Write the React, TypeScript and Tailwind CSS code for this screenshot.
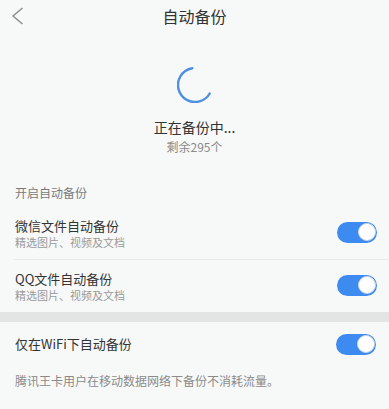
import React from 'react';

const font = { fontFamily: '"Noto Sans CJK SC", "Noto Sans", sans-serif' };

const Toggle: React.FC = () => (
  <div className="w-[40px] h-[21px] rounded-full bg-[#3d8bf0] flex items-center justify-end pr-[1.5px] shrink-0">
    <div className="w-[18px] h-[18px] rounded-full bg-white border border-[#c9d4de]"></div>
  </div>
);

const Row: React.FC<{ title: string; sub: string }> = ({ title, sub }) => (
  <div className="flex items-center justify-between pl-[15px] pr-[12px] h-[54px]">
    <div className="flex flex-col pt-[2px]">
      <span className="text-[13px] leading-[18px] text-[#333]">{title}</span>
      <span className="text-[11px] leading-[15px] text-[#9a9a9a]">{sub}</span>
    </div>
    <Toggle />
  </div>
);

const App: React.FC = () => {
  return (
    <div className="w-[389px] h-[409px] bg-[#f7f9f9] overflow-hidden flex flex-col" style={font}>
      {/* Header */}
      <div className="h-8 relative flex items-center justify-center">
        <svg className="absolute left-0 top-0" width="32" height="32" viewBox="0 0 32 32">
          <polyline points="22.5,8 13,16 22.5,24" fill="none" stroke="#8a8a8a" strokeWidth="1.4" />
        </svg>
        <span className="text-[16px] text-[#333]">自动备份</span>
      </div>

      {/* Progress */}
      <div className="flex flex-col items-center mt-[35px]">
        <svg width="36" height="36" viewBox="0 0 36 36">
          <circle
            cx="18"
            cy="18"
            r="17"
            fill="none"
            stroke="#4f8fdf"
            strokeWidth="2.4"
            strokeLinecap="round"
            strokeDasharray="68 106.8"
            transform="rotate(30 18 18)"
          />
        </svg>
        <span className="mt-[14px] text-[14px] leading-[20px] text-[#333]">正在备份中...</span>
        <span className="mt-[2px] text-[12px] leading-[16px] text-[#8a8a8a]">剩余295个</span>
      </div>

      {/* Section label */}
      <div className="mt-[30px] pl-[15px] text-[12px] leading-[16px] text-[#7a7a7a]">开启自动备份</div>

      <div className="mt-[4px]">
        <Row title="微信文件自动备份" sub="精选图片、视频及文档" />
        <div className="ml-[14px] h-px bg-[#e8ebeb]"></div>
        <div className="-mt-[2px]">
          <Row title="QQ文件自动备份" sub="精选图片、视频及文档" />
        </div>
      </div>

      <div className="h-[10px] bg-[#e2e5e4]"></div>

      <div className="flex items-center justify-between pl-[15px] pr-[13px] h-[44px]">
        <span className="text-[13px] text-[#333]">仅在WiFi下自动备份</span>
        <Toggle />
      </div>

      <div className="mt-[7px] pl-[15px] text-[12px] leading-[16px] text-[#8a8a8a]">
        腾讯王卡用户在移动数据网络下备份不消耗流量。
      </div>
    </div>
  );
};

export default App;
